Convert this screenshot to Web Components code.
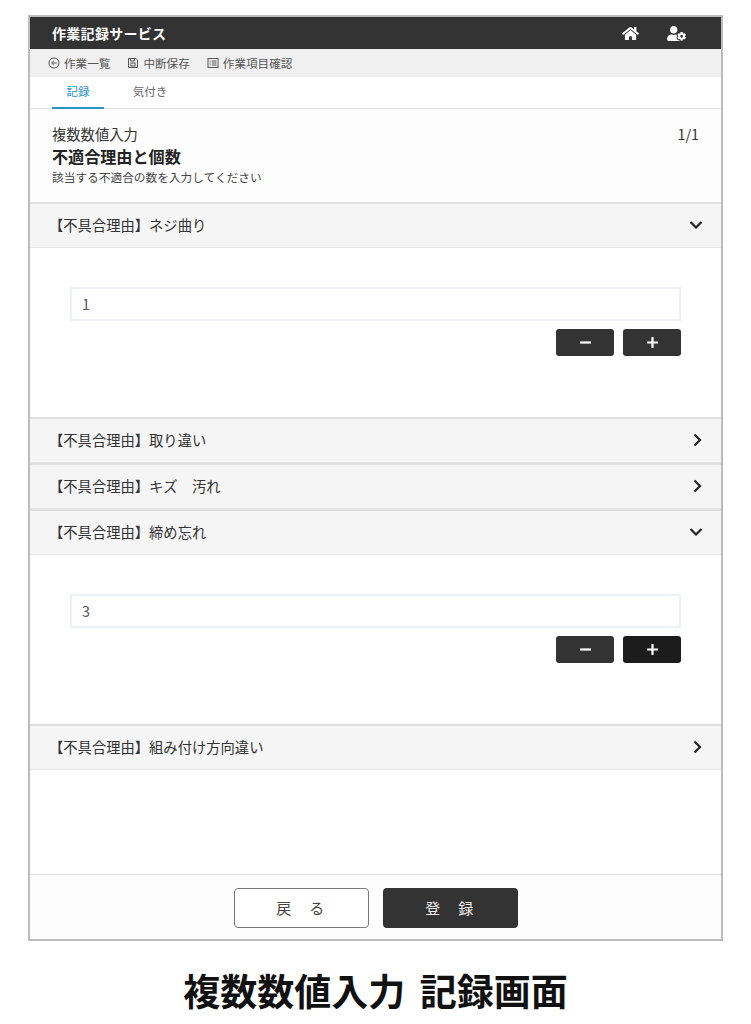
<!DOCTYPE html>
<html lang="ja">
<head>
<meta charset="utf-8">
<title>複数数値入力 記録画面</title>
<style>
  html, body { margin: 0; background: #fff; }
  body { font-family: "Noto Sans CJK JP", "Noto Sans", sans-serif; color: #333; }
</style>
</head>
<body>
<app-frame>
  <app-header title-text="作業記録サービス"></app-header>
  <tool-bar></tool-bar>
  <tab-bar></tab-bar>
  <question-head></question-head>
  <accordion-item label="【不具合理由】ネジ曲り" open value="1"></accordion-item>
  <accordion-item label="【不具合理由】取り違い"></accordion-item>
  <accordion-item label="【不具合理由】キズ　汚れ"></accordion-item>
  <accordion-item label="【不具合理由】締め忘れ" open value="3" active></accordion-item>
  <accordion-item label="【不具合理由】組み付け方向違い"></accordion-item>
  <app-footer slot="footer"></app-footer>
</app-frame>
<page-caption>複数数値入力 記録画面</page-caption>

<script>
class AppFrame extends HTMLElement {
  constructor() {
    super();
    this.attachShadow({mode: 'open'}).innerHTML = `
      <style>
        :host { display: flex; flex-direction: column; box-sizing: border-box; width: 695px; height: 926px;
                margin: 15px 0 0 28px; border: 2px solid #bcbcbc; background: #fff; }
        .body { flex: 1; display: flex; flex-direction: column; }
      </style>
      <div class="body"><slot></slot></div>
      <slot name="footer"></slot>`;
  }
}

class AppHeader extends HTMLElement {
  constructor() {
    super();
    this.attachShadow({mode: 'open'}).innerHTML = `
      <style>
        :host { display: flex; align-items: center; height: 32px; padding: 0 35px 0 22px; background: #333; color: #fff;
                font-size: 14px; font-weight: 700; letter-spacing: .3px; }
        .title { flex: 1; }
        svg { display: block; fill: #fff; }
        .home { width: 17px; height: 15px; margin-right: 28px; }
        .user { width: 19px; height: 15px; }
      </style>
      <div class="title">${this.getAttribute('title-text')}</div>
      <svg class="home" viewBox="0 0 576 512"><path d="M280.37 148.26L96 300.11V464a16 16 0 0 0 16 16l112.06-.29a16 16 0 0 0 15.92-16V368a16 16 0 0 1 16-16h64a16 16 0 0 1 16 16v95.64a16 16 0 0 0 16 16.05L464 480a16 16 0 0 0 16-16V300L295.67 148.26a12.19 12.19 0 0 0-15.3 0zM571.6 251.47L488 182.56V44.05a12 12 0 0 0-12-12h-56a12 12 0 0 0-12 12v72.61L318.47 43a48 48 0 0 0-61 0L4.34 251.47a12 12 0 0 0-1.6 16.9l25.5 31A12 12 0 0 0 45.15 301l235.22-193.74a12.19 12.19 0 0 1 15.3 0L530.9 301a12 12 0 0 0 16.9-1.6l25.5-31a12 12 0 0 0-1.7-16.93z"/></svg>
      <svg class="user" viewBox="0 0 640 512"><path d="M610.5 373.3c2.6-14.1 2.6-28.5 0-42.6l25.8-14.9c3-1.7 4.3-5.2 3.3-8.5-6.7-21.6-18.2-41.2-33.2-57.4-2.3-2.5-6-3.1-9-1.4l-25.8 14.9c-10.9-9.3-23.4-16.5-36.9-21.3v-29.8c0-3.4-2.4-6.4-5.7-7.1-22.3-5-45-4.8-66.2 0-3.3.7-5.7 3.7-5.7 7.1v29.8c-13.5 4.8-26 12-36.9 21.3l-25.8-14.9c-2.9-1.7-6.7-1.1-9 1.4-15 16.2-26.5 35.8-33.2 57.4-1 3.3.4 6.8 3.3 8.5l25.8 14.9c-2.6 14.1-2.6 28.5 0 42.6l-25.8 14.9c-3 1.7-4.3 5.2-3.3 8.5 6.7 21.6 18.2 41.1 33.2 57.4 2.3 2.5 6 3.1 9 1.4l25.8-14.9c10.9 9.3 23.4 16.5 36.9 21.3v29.8c0 3.4 2.4 6.4 5.7 7.1 22.3 5 45 4.8 66.2 0 3.3-.7 5.7-3.7 5.7-7.1v-29.8c13.5-4.8 26-12 36.9-21.3l25.8 14.9c2.9 1.7 6.7 1.1 9-1.4 15-16.2 26.5-35.8 33.2-57.4 1-3.3-.4-6.8-3.3-8.5l-25.8-14.9zM496 400.5c-26.8 0-48.5-21.8-48.5-48.5s21.8-48.5 48.5-48.5 48.5 21.8 48.5 48.5-21.7 48.5-48.5 48.5zM224 256c70.7 0 128-57.3 128-128S294.7 0 224 0 96 57.3 96 128s57.3 128 128 128zm201.2 226.5c-2.3-1.2-4.6-2.6-6.8-3.9l-7.9 4.6c-6 3.4-12.8 5.3-19.6 5.3-10.9 0-21.4-4.6-28.9-12.6-18.3-19.8-32.3-43.9-40.2-69.6-5.5-17.7 1.9-36.4 17.9-45.7l7.9-4.6c-.1-2.6-.1-5.2 0-7.8l-7.9-4.6c-16-9.2-23.4-28-17.9-45.7.9-2.9 2.2-5.8 3.2-8.7-3.8-.3-7.5-1.2-11.4-1.2h-16.7c-22.2 10.2-46.9 16-72.9 16s-50.6-5.8-72.9-16h-16.7C60.2 288 0 348.2 0 422.4V464c0 26.5 21.5 48 48 48h352c10.1 0 19.5-3.2 27.2-8.5-1.2-3.8-2-7.7-2-11.8v-9.2z"/></svg>`;
  }
}

class ToolBar extends HTMLElement {
  constructor() {
    super();
    this.attachShadow({mode: 'open'}).innerHTML = `
      <style>
        :host { display: flex; align-items: center; gap: 17px; box-sizing: border-box; height: 28px; padding: 0 0 1px 18px;
                background: #f0f0f0; color: #555; font-size: 11.6px; }
        span { display: flex; align-items: center; gap: 4px; }
        svg { width: 12px; height: 12px; fill: none; stroke: #555; stroke-width: 1; }
      </style>
      <span><svg viewBox="0 0 12 12"><circle cx="6" cy="6" r="5"/><path d="M8.8 6H4M5.8 4 3.600 6l2.200 2"/></svg>作業一覧</span>
      <span><svg viewBox="0 0 12 12"><path d="M1.500 1.500h7.500l1.500 1.500v7.500h-9z"/><path d="M3.500 1.500v2.500h4V1.500"/><rect x="4" y="6" width="4" height="3"/></svg>中断保存</span>
      <span><svg viewBox="0 0 12 12"><rect x="1" y="1.500" width="10" height="9"/><path d="M2.600 4h1M2.600 6h1M2.600 8h1M4.800 4h4.600M4.800 6h4.600M4.800 8h4.600"/></svg>作業項目確認</span>`;
  }
}

class TabBar extends HTMLElement {
  constructor() {
    super();
    this.attachShadow({mode: 'open'}).innerHTML = `
      <style>
        :host { display: flex; height: 32px; box-sizing: border-box; padding-left: 22px; border-bottom: 1px solid #e2e2e2;
                font-size: 11.5px; color: #666; }
        div { display: flex; justify-content: center; align-items: center; width: 52px; height: 32px; box-sizing: border-box; padding-bottom: 4px; }
        .on { color: #2b93c9; border-bottom: 2px solid #2b93c9; padding-bottom: 2px; }
        .off { margin-left: 19px; width: 54px; }
      </style>
      <div class="on">記録</div>
      <div class="off">気付き</div>`;
  }
}

class QuestionHead extends HTMLElement {
  constructor() {
    super();
    this.attachShadow({mode: 'open'}).innerHTML = `
      <style>
        :host { display: flex; justify-content: space-between; box-sizing: border-box; height: 93px; padding: 14px 22px 0 22px;
                background: #fdfdfd; color: #333; }
        .kind { font-size: 14.3px; line-height: 21px; }
        .name { font-size: 16.1px; font-weight: 700; line-height: 24px; color: #222; }
        .hint { font-size: 11.7px; line-height: 17px; color: #444; }
        .page { font-size: 14.3px; line-height: 21px; }
      </style>
      <div>
        <div class="kind">複数数値入力</div>
        <div class="name">不適合理由と個数</div>
        <div class="hint">該当する不適合の数を入力してください</div>
      </div>
      <div class="page">1/1</div>`;
  }
}

class AccordionItem extends HTMLElement {
  constructor() {
    super();
    const open = this.hasAttribute('open');
    const plus = this.hasAttribute('active') ? 'plus active' : 'plus';
    this.attachShadow({mode: 'open'}).innerHTML = `
      <style>
        :host { display: block; }
        .head { display: flex; align-items: center; justify-content: space-between; box-sizing: border-box; height: 46px;
                padding: 0 18px 2px 19px; background: #f5f5f5; border-top: 2px solid #e0e0e0; border-bottom: 1px solid #e6e6e6;
                font-size: 14.3px; color: #333; }
        .head span { margin-top: -1px; }
        .head svg.right { margin-right: 1px; }
        svg { display: block; fill: none; stroke: #222; stroke-width: 2.2; }
        .body { box-sizing: border-box; height: 169px; padding: 39px 40px 0; background: #fff; }
        .field { box-sizing: border-box; height: 34px; line-height: 30px; padding-left: 10px; border: 2px solid #edf0f4;
                 font-size: 14.3px; color: #555; }
        .btns { display: flex; justify-content: flex-end; gap: 9px; margin-top: 8px; }
        .btn { display: flex; align-items: center; justify-content: center; width: 58px; height: 27px; border-radius: 3px; background: #333; }
        .btn.active { background: #1c1c1c; }
        .btn svg { width: 13px; height: 13px; stroke: #fff; stroke-width: 2.2; }
      </style>
      <div class="head">
        <span>${this.getAttribute('label')}</span>
        ${open
          ? '<svg width="14" height="10" viewBox="0 0 14 10"><path d="M1.500 2 7 7.500 12.500 2"/></svg>'
          : '<svg class="right" width="10" height="14" viewBox="0 0 10 14"><path d="M2.500 1.500 8 7 2.500 12.500"/></svg>'}
      </div>
      ${open ? `<div class="body">
        <div class="field">${this.getAttribute('value')}</div>
        <div class="btns">
          <div class="btn"><svg viewBox="0 0 13 13"><path d="M1 6.500h11"/></svg></div>
          <div class="btn ${plus}"><svg viewBox="0 0 13 13"><path d="M1 6.500h11M6.500 1v11"/></svg></div>
        </div>
      </div>` : ''}`;
  }
}

class AppFooter extends HTMLElement {
  constructor() {
    super();
    this.attachShadow({mode: 'open'}).innerHTML = `
      <style>
        :host { display: flex; justify-content: center; gap: 14px; box-sizing: border-box; height: 65px; padding: 13px 0 0 0;
                border-top: 1px solid #dedede; background: #fdfdfd; }
        div { display: flex; align-items: center; justify-content: center; box-sizing: border-box; width: 135px; height: 40px;
              padding-bottom: 2px; border-radius: 4px; font-size: 15px; letter-spacing: .1em; white-space: pre; }
        .back { background: #fff; border: 1px solid #777; color: #444; }
        .save { background: #333; color: #eee; }
      </style>
      <div class="back">戻　る</div>
      <div class="save">登　録</div>`;
  }
}

class PageCaption extends HTMLElement {
  constructor() {
    super();
    this.attachShadow({mode: 'open'}).innerHTML = `
      <style>
        :host { display: block; margin-top: 22px; text-align: center; font-size: 37px; font-weight: 700; line-height: 54px;
                word-spacing: 6px; color: #111; }
      </style>
      <slot></slot>`;
  }
}

customElements.define('app-frame', AppFrame);
customElements.define('app-header', AppHeader);
customElements.define('tool-bar', ToolBar);
customElements.define('tab-bar', TabBar);
customElements.define('question-head', QuestionHead);
customElements.define('accordion-item', AccordionItem);
customElements.define('app-footer', AppFooter);
customElements.define('page-caption', PageCaption);
</script>
</body>
</html>
